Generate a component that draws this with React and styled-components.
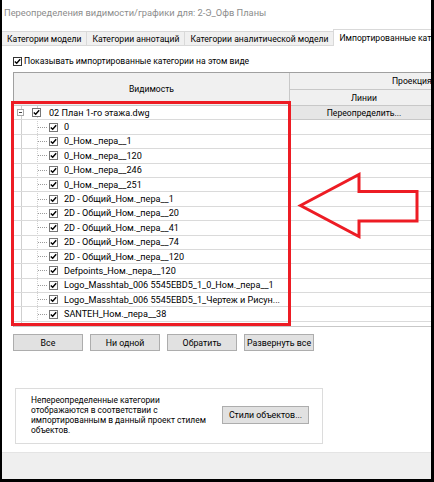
import React from "react";
import styled, { createGlobalStyle } from "styled-components";

const GlobalStyle = createGlobalStyle`
  body {
    margin: 0;
    background: #ffffff;
    font-family: Roboto, "Noto Sans", "Liberation Sans", sans-serif;
  }
`;

const StyledWindow = styled.div`
  position: relative;
  width: 434px;
  height: 482px;
  box-sizing: border-box;
  border: solid #000;
  border-width: 0 3px 3px 2px;
  background: #fff;
  overflow: hidden;
  display: flex;
  flex-direction: column;
  font-size: 8.6px;
  color: #000;
`;
const StyledTitle = styled.div`
  height: 25px;
  display: flex;
  align-items: center;
  padding-left: 2px;
  color: #8c8c8c;
  font-size: 9.3px;
  white-space: nowrap;
`;
const StyledTabs = styled.div`
  display: flex;
  align-items: flex-end;
  height: 20px;
  border-bottom: 1px solid #d9d9d9;
  white-space: nowrap;
`;
const StyledTab = styled.div`
  height: ${({ active }) => (active ? "16px" : "13px")};
  display: flex;
  align-items: center;
  padding: 0 5px;
  background: ${({ active }) => (active ? "#fff" : "#f0f0f0")};
  border: 1px solid #d9d9d9;
  border-bottom: none;
  margin-left: -1px;
  margin-bottom: ${({ active }) => (active ? "-1px" : "0")};
  &:first-child {
    margin-left: 0;
    border-left: none;
  }
`;
const StyledPanel = styled.div`
  flex: 1;
  display: flex;
  flex-direction: column;
  padding-left: 11px;
`;
const StyledCheckRow = styled.label`
  display: flex;
  align-items: center;
  gap: 2px;
  height: 10px;
  margin-top: 10px;
  white-space: nowrap;
`;
const StyledBox = styled.span`
  width: 9px;
  height: 9px;
  box-sizing: border-box;
  border: 1px solid ${({ dark }) => (dark ? "#333" : "#767676")};
  background: #fff;
  display: inline-flex;
  align-items: center;
  justify-content: center;
  flex: none;
`;
const StyledTable = styled.div`
  margin-top: 6px;
  height: 255px;
  box-sizing: border-box;
  border-top: 1px solid #a0a0a0;
  border-left: 1px solid #a0a0a0;
  border-bottom: 1px solid #c8c8c8;
  display: flex;
  width: 600px;
`;
const StyledColumn = styled.div`
  width: ${({ width }) => width}px;
  flex: none;
  display: flex;
  flex-direction: column;
  border-right: 1px solid #c8c8c8;
  position: relative;
`;
const StyledHeadCell = styled.div`
  height: ${({ h }) => h}px;
  width: ${({ span }) => (span ? `${span}px` : "auto")};
  flex: none;
  box-sizing: border-box;
  background: #f0f0f0;
  border-bottom: 1px solid #c8c8c8;
  display: flex;
  align-items: center;
  justify-content: center;
  white-space: nowrap;
`;
const StyledRow = styled.div`
  height: 14.4px;
  flex: none;
  box-sizing: border-box;
  border-bottom: 1px solid #dadada;
  display: flex;
  align-items: center;
  white-space: nowrap;
  overflow: hidden;
  font-size: 9.1px;
  padding-left: ${({ child }) => (child ? "35px" : "18px")};
  position: relative;
`;
const StyledGridLine = styled.div`
  position: absolute;
  top: 33px;
  bottom: 0;
  left: ${({ x }) => x}px;
  border-left: 1px ${({ dotted }) => (dotted ? "dotted" : "solid")} #cfcfcf;
`;
const StyledToggle = styled.span`
  width: 7px;
  height: 7px;
  box-sizing: border-box;
  border: 1px solid #a8a8a8;
  background: #fff;
  display: inline-flex;
  align-items: center;
  justify-content: center;
  margin-left: -15px;
  margin-right: 8px;
  &::after {
    content: "";
    width: 3px;
    height: 1px;
    background: #444;
  }
`;
const StyledConnector = styled.span`
  width: 9px;
  border-top: 1px dotted #9a9a9a;
  margin-left: -11px;
  margin-right: 2px;
`;
const StyledLabel = styled.span`
  margin-left: ${({ gap }) => gap}px;
`;
const StyledOverrideCell = styled.div`
  height: 14.4px;
  flex: none;
  box-sizing: border-box;
  background: #e6e6e6;
  border-bottom: 1px solid #c8c8c8;
  display: flex;
  align-items: center;
  justify-content: center;
`;
const StyledEmptyRow = styled.div`
  height: 14.4px;
  flex: none;
  box-sizing: border-box;
  border-bottom: 1px solid #dadada;
`;
const StyledButtons = styled.div`
  display: flex;
  gap: 7px;
  margin-top: 7px;
`;
const StyledButton = styled.button`
  width: ${({ w }) => w || 70}px;
  height: ${({ h }) => h || 17}px;
  padding: 0;
  box-sizing: border-box;
  background: #e1e1e1;
  border: 1px solid #adadad;
  border-radius: 0;
  font-family: inherit;
  font-size: 8.8px;
  color: #000;
  white-space: nowrap;
`;
const StyledInfo = styled.div`
  width: 308px;
  height: 56px;
  box-sizing: border-box;
  margin: 37px 0 0 2px;
  border: 1px solid #dcdcdc;
  display: flex;
  align-items: center;
  padding: 0 0 2px 15px;
  gap: 14px;
`;
const StyledInfoText = styled.p`
  margin: 0;
  width: 177px;
  line-height: 10px;
  font-size: 8.4px;
  white-space: nowrap;
`;
const StyledFooter = styled.div`
  margin-top: auto;
  height: 26px;
  margin-left: -11px;
  background: #efefef;
  border-top: 1px solid #e4e4e4;
`;
const StyledFrame = styled.div`
  position: absolute;
  left: 9px;
  top: 101px;
  width: 280px;
  height: 225px;
  box-sizing: border-box;
  border: 3px solid #ed1c24;
  pointer-events: none;
`;
const StyledArrow = styled.svg`
  position: absolute;
  left: 0;
  top: 0;
  pointer-events: none;
`;

const Check = () => (
  <svg width="7" height="7" viewBox="0 0 7 7">
    <path d="M0.8 3.4 L2.7 5.3 L6.2 1.2" fill="none" stroke="#000" strokeWidth="1.4" />
  </svg>
);

const layers = [
  "0",
  "0_Ном._пера__1",
  "0_Ном._пера__120",
  "0_Ном._пера__246",
  "0_Ном._пера__251",
  "2D - Общий_Ном._пера__1",
  "2D - Общий_Ном._пера__20",
  "2D - Общий_Ном._пера__41",
  "2D - Общий_Ном._пера__74",
  "2D - Общий_Ном._пера__120",
  "Defpoints_Ном._пера__120",
  "Logo_Masshtab_006 5545EBD5_1_0_Ном._пера__1",
  "Logo_Masshtab_006 5545EBD5_1_Чертеж и Рисун...",
  "SANTEH_Ном._пера__38",
];

const App = () => {
  return (
    <>
      <GlobalStyle />
      <StyledWindow>
        <StyledTitle>Переопределения видимости/графики для: 2-Э_Офв Планы</StyledTitle>
        <StyledTabs>
          <StyledTab>Категории модели</StyledTab>
          <StyledTab>Категории аннотаций</StyledTab>
          <StyledTab>Категории аналитической модели</StyledTab>
          <StyledTab active>Импортированные категории</StyledTab>
        </StyledTabs>
        <StyledPanel>
          <StyledCheckRow>
            <StyledBox dark>
              <Check />
            </StyledBox>
            Показывать импортированные категории на этом виде
          </StyledCheckRow>

          <StyledTable>
            <StyledColumn width={275}>
              <StyledHeadCell h={33}>Видимость</StyledHeadCell>
              <StyledGridLine x={7} />
              <StyledGridLine x={23} dotted />
              <StyledRow>
                <StyledToggle />
                <StyledBox>
                  <Check />
                </StyledBox>
                <StyledLabel gap={8}>02 План 1-го этажа.dwg</StyledLabel>
              </StyledRow>
              {layers.map((name) => (
                <StyledRow child key={name}>
                  <StyledConnector />
                  <StyledBox>
                    <Check />
                  </StyledBox>
                  <StyledLabel gap={6}>{name}</StyledLabel>
                </StyledRow>
              ))}
            </StyledColumn>

            <StyledColumn width={148}>
              <StyledHeadCell h={17} span={300}>
                Проекция/Поверхность
              </StyledHeadCell>
              <StyledHeadCell h={16}>Линии</StyledHeadCell>
              <StyledOverrideCell>Переопределить...</StyledOverrideCell>
              {layers.map((name) => (
                <StyledEmptyRow key={name} />
              ))}
            </StyledColumn>
          </StyledTable>

          <StyledButtons>
            <StyledButton>Все</StyledButton>
            <StyledButton>Ни одной</StyledButton>
            <StyledButton>Обратить</StyledButton>
            <StyledButton>Развернуть все</StyledButton>
          </StyledButtons>

          <StyledInfo>
            <StyledInfoText>
              Непереопределенные категории
              <br />
              отображаются в соответствии с
              <br />
              импортированным в данный проект стилем
              <br />
              объектов.
            </StyledInfoText>
            <StyledButton w={87} h={18}>
              Стили объектов...
            </StyledButton>
          </StyledInfo>

          <StyledFooter />
        </StyledPanel>

        <StyledFrame />
        <StyledArrow width="434" height="482">
          <polygon
            points="298.5,205.5 357,174.5 357,191.5 415,191.5 415,221 357,221 357,236.5"
            fill="none"
            stroke="#ed1c24"
            strokeWidth="3"
          />
        </StyledArrow>
      </StyledWindow>
    </>
  );
};

export default App;
